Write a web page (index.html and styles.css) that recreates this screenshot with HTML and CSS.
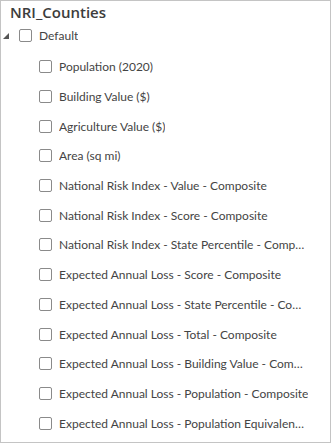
FILE: index.html
```html
<!DOCTYPE html>
<html lang="en">
<head>
  <meta charset="UTF-8">
  <meta name="viewport" content="width=device-width, initial-scale=1.0">
  <title>NRI_Counties</title>
  <link rel="stylesheet" href="styles.css">
</head>
<body>

<div class="panel">
  <div class="title">NRI_Counties</div>

  <div class="row group">
    <span class="toggle"></span>
    <span class="box"></span>
    <span class="label">Default</span>
  </div>

  <div class="children">
    <div class="row"><span class="box"></span><span class="label">Population (2020)</span></div>
    <div class="row"><span class="box"></span><span class="label">Building Value ($)</span></div>
    <div class="row"><span class="box"></span><span class="label">Agriculture Value ($)</span></div>
    <div class="row"><span class="box"></span><span class="label">Area (sq mi)</span></div>
    <div class="row"><span class="box"></span><span class="label">National Risk Index - Value - Composite</span></div>
    <div class="row"><span class="box"></span><span class="label">National Risk Index - Score - Composite</span></div>
    <div class="row"><span class="box"></span><span class="label">National Risk Index - State Percentile - Composite</span></div>
    <div class="row"><span class="box"></span><span class="label">Expected Annual Loss - Score - Composite</span></div>
    <div class="row"><span class="box"></span><span class="label">Expected Annual Loss - State Percentile - Composite</span></div>
    <div class="row"><span class="box"></span><span class="label">Expected Annual Loss - Total - Composite</span></div>
    <div class="row"><span class="box"></span><span class="label">Expected Annual Loss - Building Value - Composite</span></div>
    <div class="row"><span class="box"></span><span class="label">Expected Annual Loss - Population - Composite</span></div>
    <div class="row"><span class="box"></span><span class="label">Expected Annual Loss - Population Equivalence - Composite</span></div>
  </div>
</div>

</body>
</html>
```

FILE: styles.css
```css
body {
  margin: 0;
  font-family: "Open Sans", "Noto Sans", sans-serif;
  color: #444;
  background-color: white;
}
.panel {
  width: 329px;
  height: 441px;
  border: 1px solid #c4c4c4;
  overflow: hidden;
}
.title {
  padding: 1px 0 0 9px;
  height: 20px;
  font-size: 15px;
  font-weight: 600;
  color: #3c3c3c;
}
.row {
  display: flex;
  align-items: center;
  height: 29.7px;
  font-family: "Lato", "Open Sans", sans-serif;
  font-size: 12px;
}
.group {
  padding-left: 2px;
  height: 27px;
}
.toggle {
  width: 0;
  height: 0;
  border-left: 6px solid transparent;
  border-bottom: 6px solid #555;
  margin-right: 10px;
  margin-top: 1px;
}
.children {
  padding-left: 38px;
  padding-top: 3px;
}
.box {
  flex: none;
  width: 11px;
  height: 11px;
  border: 1px solid #8a8a8a;
  border-radius: 2px;
  margin-right: 7px;
}
.label {
  white-space: nowrap;
  overflow: hidden;
  text-overflow: ellipsis;
  max-width: 250px;
}
```
